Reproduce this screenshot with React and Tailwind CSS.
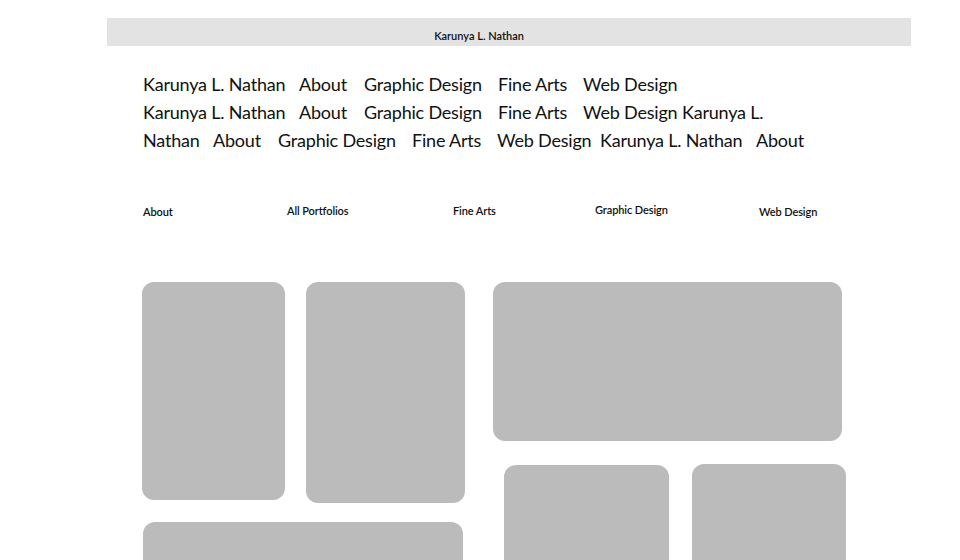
const line1 = [
  ["Karunya L. Nathan", 156],
  ["About", 65],
  ["Graphic Design", 134],
  ["Fine Arts", 85],
  ["Web Design", 99],
];

const line2 = [
  ["Karunya L. Nathan", 156],
  ["About", 65],
  ["Graphic Design", 134],
  ["Fine Arts", 85],
  ["Web Design", 99],
  ["Karunya L.", 90],
];

const line3 = [
  ["Nathan", 70],
  ["About", 65],
  ["Graphic Design", 134],
  ["Fine Arts", 85],
  ["Web Design", 103],
  ["Karunya L. Nathan", 156],
  ["About", 60],
];

const nav = [
  ["About", "w-[144px]", "mt-[2px]"],
  ["All Portfolios", "w-[166px]", "mt-[1px]"],
  ["Fine Arts", "w-[142px]", "mt-[1px]"],
  ["Graphic Design", "w-[164px]", "mt-0"],
  ["Web Design", "w-[100px]", "mt-[2px]"],
];

function Line({ words }) {
  return (
    <div className="flex h-[28px] items-center whitespace-nowrap">
      {words.map(([w, width], i) => (
        <span key={i} className="shrink-0" style={{ width }}>
          {w}
        </span>
      ))}
    </div>
  );
}

export default function App() {
  return (
    <div
      className="w-[960px] h-[560px] overflow-hidden bg-white text-[#111]"
      style={{ fontFamily: 'Lato, "Open Sans", sans-serif' }}
    >
      {/* Top bar */}
      <div className="ml-[107px] mt-[18px] w-[804px] h-[28px] bg-[#e4e3e4] flex items-center justify-center">
        <span className="text-[11px] font-semibold pr-[60px] pt-[8px]">Karunya L. Nathan</span>
      </div>

      {/* Repeated nav text */}
      <div className="ml-[143px] mt-[24px] text-[18px] tracking-[-0.2px]">
        <Line words={line1} />
        <Line words={line2} />
        <Line words={line3} />
      </div>

      {/* Nav row */}
      <div className="ml-[143px] mt-[48px] flex text-[11px] font-semibold tracking-[-0.1px]">
        {nav.map(([label, w, mt]) => (
          <span key={label} className={`${w} ${mt} shrink-0`}>
            {label}
          </span>
        ))}
      </div>

      {/* Tiles */}
      <div className="ml-[142px] mt-[61px] flex gap-[28px]">
        <div className="w-[323px] flex flex-col">
          <div className="flex gap-[21px] items-start">
            <div className="w-[143px] h-[218px] rounded-[12px] bg-[#bbbbbb]" />
            <div className="w-[159px] h-[221px] rounded-[12px] bg-[#bbbbbb]" />
          </div>
          <div className="ml-[1px] mt-[19px] w-[320px] h-[160px] rounded-[12px] bg-[#bbbbbb]" />
        </div>
        <div className="flex flex-col">
          <div className="w-[349px] h-[159px] rounded-[12px] bg-[#bbbbbb]" />
          <div className="mt-[23px] flex gap-[23px] items-start">
            <div className="ml-[11px] mt-[1px] w-[165px] h-[160px] rounded-[12px] bg-[#bbbbbb]" />
            <div className="w-[154px] h-[160px] rounded-[12px] bg-[#bbbbbb]" />
          </div>
        </div>
      </div>
    </div>
  );
}
